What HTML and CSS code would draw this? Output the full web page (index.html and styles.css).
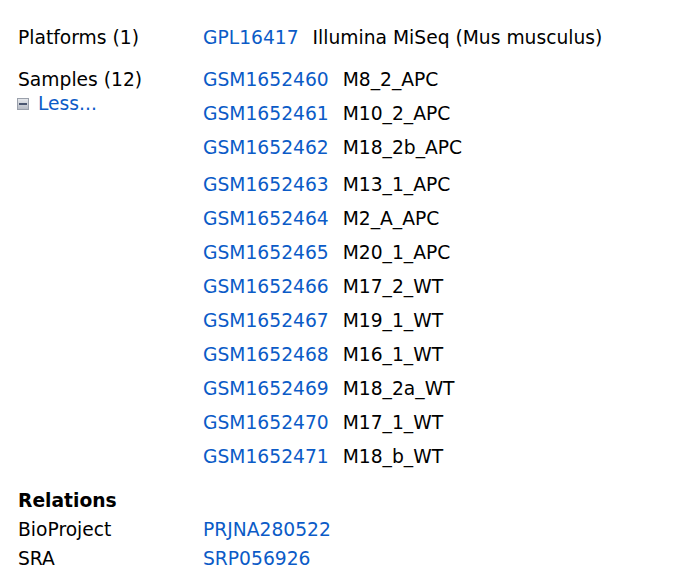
FILE: index.html
```html
<!DOCTYPE html>
<html>
<head>
<meta charset="utf-8">
<link rel="stylesheet" href="styles.css">
</head>
<body>
<div class="page">
  <div class="row platforms">
    <div class="label">Platforms (1)</div>
    <div class="value">
      <div class="item"><a href="#">GPL16417</a><span>Illumina MiSeq (Mus musculus)</span></div>
    </div>
  </div>
  <div class="row samples">
    <div class="label">
      <div>Samples (12)</div>
      <div class="less"><svg class="minus" width="12" height="12" viewBox="0 0 12 12"><defs><linearGradient id="g" x1="0" y1="0" x2="0" y2="1"><stop offset="0" stop-color="#e8eaee"/><stop offset="1" stop-color="#b4b9c3"/></linearGradient></defs><rect x="0.5" y="0.5" width="11" height="11" fill="url(#g)" stroke="#9aa0ab"/><rect x="2" y="5" width="8" height="2" fill="#4a5670"/></svg><a href="#">Less...</a></div>
    </div>
    <div class="value">
      <div class="list">
        <div class="item"><a href="#">GSM1652460</a><span>M8_2_APC</span></div>
        <div class="item"><a href="#">GSM1652461</a><span>M10_2_APC</span></div>
        <div class="item"><a href="#">GSM1652462</a><span>M18_2b_APC</span></div>
      </div>
      <div class="list more">
        <div class="item"><a href="#">GSM1652463</a><span>M13_1_APC</span></div>
        <div class="item"><a href="#">GSM1652464</a><span>M2_A_APC</span></div>
        <div class="item"><a href="#">GSM1652465</a><span>M20_1_APC</span></div>
        <div class="item"><a href="#">GSM1652466</a><span>M17_2_WT</span></div>
        <div class="item"><a href="#">GSM1652467</a><span>M19_1_WT</span></div>
        <div class="item"><a href="#">GSM1652468</a><span>M16_1_WT</span></div>
        <div class="item"><a href="#">GSM1652469</a><span>M18_2a_WT</span></div>
        <div class="item"><a href="#">GSM1652470</a><span>M17_1_WT</span></div>
        <div class="item"><a href="#">GSM1652471</a><span>M18_b_WT</span></div>
      </div>
    </div>
  </div>
  <div class="relations">
    <div class="heading">Relations</div>
    <div class="rel"><div class="label">BioProject</div><div class="value"><a href="#">PRJNA280522</a></div></div>
    <div class="rel"><div class="label">SRA</div><div class="value"><a href="#">SRP056926</a></div></div>
  </div>
</div>
</body>
</html>
```
FILE: styles.css
```css
html, body {
  margin: 0;
  padding: 0;
  background: #ffffff;
}
body {
  font-family: "DejaVu Sans", Verdana, sans-serif;
  font-size: 18.7px;
  color: #000000;
}
a {
  color: #0b5bc7;
  text-decoration: none;
}
.page {
  padding: 26px 0 0 18px;
  display: flex;
  flex-direction: column;
}
.row {
  display: grid;
  grid-template-columns: 185px 1fr;
  line-height: 24px;
}
.samples {
  margin-top: 18px;
}
.value {
  display: flex;
  flex-direction: column;
}
.list {
  display: flex;
  flex-direction: column;
  gap: 10px;
}
.more {
  margin-top: 13px;
}
.item {
  display: flex;
  gap: 14px;
}
.less {
  display: flex;
  align-items: center;
  gap: 9px;
  margin-left: -1px;
}
.minus {
  display: block;
}
.relations {
  margin-top: 17px;
  line-height: 29px;
}
.heading {
  font-weight: bold;
}
.rel {
  display: grid;
  grid-template-columns: 185px 1fr;
}
```
